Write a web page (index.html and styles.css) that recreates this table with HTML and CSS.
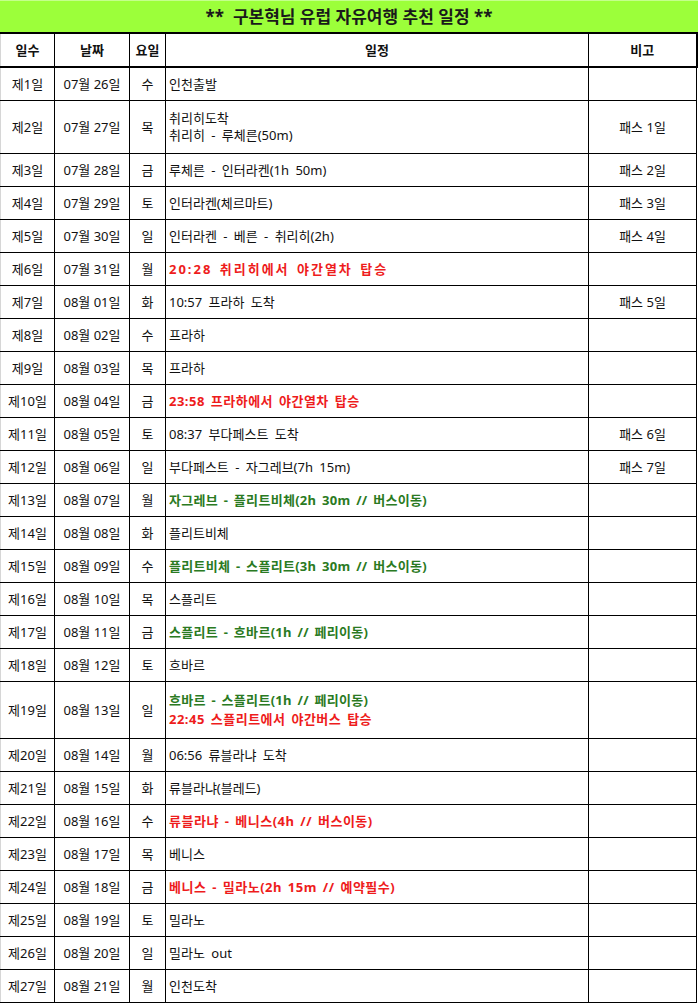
FILE: index.html
```html
<!DOCTYPE html>
<html lang="ko">
<head>
<meta charset="utf-8">
<title>구본혁님 유럽 자유여행 추천 일정</title>
<link rel="stylesheet" href="styles.css">
</head>
<body>
<div class="title">**&nbsp;&nbsp;구본혁님 유럽 자유여행 추천 일정 **</div>
<table class="sched">
<colgroup>
<col class="c1"><col class="c2"><col class="c3"><col class="c4"><col class="c5">
</colgroup>
<thead>
<tr><th>일수</th><th>날짜</th><th>요일</th><th>일정</th><th>비고</th></tr>
</thead>
<tbody>
<tr><td>제1일</td><td>07월 26일</td><td>수</td><td class="plan">인천출발</td><td></td></tr>
<tr class="tall"><td>제2일</td><td>07월 27일</td><td>목</td><td class="plan">취리히도착<br>취리히 - 루체른(50m)</td><td>패스 1일</td></tr>
<tr><td>제3일</td><td>07월 28일</td><td>금</td><td class="plan">루체른 - 인터라켄(1h 50m)</td><td>패스 2일</td></tr>
<tr><td>제4일</td><td>07월 29일</td><td>토</td><td class="plan">인터라켄(체르마트)</td><td>패스 3일</td></tr>
<tr><td>제5일</td><td>07월 30일</td><td>일</td><td class="plan">인터라켄 - 베른 - 취리히(2h)</td><td>패스 4일</td></tr>
<tr><td>제6일</td><td>07월 31일</td><td>월</td><td class="plan"><span class="red wide">20:28 취리히에서 야간열차 탑승</span></td><td></td></tr>
<tr><td>제7일</td><td>08월 01일</td><td>화</td><td class="plan">10:57 프라하 도착</td><td>패스 5일</td></tr>
<tr><td>제8일</td><td>08월 02일</td><td>수</td><td class="plan">프라하</td><td></td></tr>
<tr><td>제9일</td><td>08월 03일</td><td>목</td><td class="plan">프라하</td><td></td></tr>
<tr><td>제10일</td><td>08월 04일</td><td>금</td><td class="plan"><span class="red">23:58 프라하에서 야간열차 탑승</span></td><td></td></tr>
<tr><td>제11일</td><td>08월 05일</td><td>토</td><td class="plan">08:37 부다페스트 도착</td><td>패스 6일</td></tr>
<tr><td>제12일</td><td>08월 06일</td><td>일</td><td class="plan">부다페스트 - 자그레브(7h 15m)</td><td>패스 7일</td></tr>
<tr><td>제13일</td><td>08월 07일</td><td>월</td><td class="plan"><span class="green">자그레브 - 플리트비체(2h 30m // 버스이동)</span></td><td></td></tr>
<tr><td>제14일</td><td>08월 08일</td><td>화</td><td class="plan">플리트비체</td><td></td></tr>
<tr><td>제15일</td><td>08월 09일</td><td>수</td><td class="plan"><span class="green">플리트비체 - 스플리트(3h 30m // 버스이동)</span></td><td></td></tr>
<tr><td>제16일</td><td>08월 10일</td><td>목</td><td class="plan">스플리트</td><td></td></tr>
<tr><td>제17일</td><td>08월 11일</td><td>금</td><td class="plan"><span class="green">스플리트 - 흐바르(1h // 페리이동)</span></td><td></td></tr>
<tr><td>제18일</td><td>08월 12일</td><td>토</td><td class="plan">흐바르</td><td></td></tr>
<tr class="taller"><td>제19일</td><td>08월 13일</td><td>일</td><td class="plan"><span class="green">흐바르 - 스플리트(1h // 페리이동)</span><br><span class="red">22:45 스플리트에서 야간버스 탑승</span></td><td></td></tr>
<tr><td>제20일</td><td>08월 14일</td><td>월</td><td class="plan">06:56 류블라냐 도착</td><td></td></tr>
<tr><td>제21일</td><td>08월 15일</td><td>화</td><td class="plan">류블라냐(블레드)</td><td></td></tr>
<tr><td>제22일</td><td>08월 16일</td><td>수</td><td class="plan"><span class="red">류블라냐 - 베니스(4h // 버스이동)</span></td><td></td></tr>
<tr><td>제23일</td><td>08월 17일</td><td>목</td><td class="plan">베니스</td><td></td></tr>
<tr><td>제24일</td><td>08월 18일</td><td>금</td><td class="plan"><span class="red">베니스 - 밀라노(2h 15m // 예약필수)</span></td><td></td></tr>
<tr><td>제25일</td><td>08월 19일</td><td>토</td><td class="plan">밀라노</td><td></td></tr>
<tr><td>제26일</td><td>08월 20일</td><td>일</td><td class="plan">밀라노 out</td><td></td></tr>
<tr><td>제27일</td><td>08월 21일</td><td>월</td><td class="plan">인천도착</td><td></td></tr>
</tbody>
</table>
</body>
</html>
```
FILE: styles.css
```css
html, body {
  margin: 0;
  padding: 0;
  background: #ffffff;
}
body {
  font-family: "Noto Sans", "Noto Sans CJK KR", sans-serif;
  font-size: 13px;
  color: #111111;
  width: 698px;
}
.title {
  height: 32px;
  line-height: 32px;
  background: #9cff3a;
  border-top: 1px solid #c4ff8c;
  box-sizing: border-box;
  text-align: center;
  font-weight: bold;
  font-size: 17px;
  color: #1a1a1a;
}
.sched {
  border-collapse: collapse;
  table-layout: fixed;
  width: 697px;
}
.c1 { width: 54px; }
.c2 { width: 75px; }
.c3 { width: 36px; }
.c4 { width: 423px; }
.c5 { width: 108px; }
.sched th, .sched td {
  border: 1px solid #000000;
  padding: 0 3px;
  text-align: center;
  vertical-align: middle;
  line-height: 17px;
  white-space: nowrap;
  overflow: hidden;
}
.sched th:first-child, .sched td:first-child {
  border-left: 1px solid #d6d6d6;
}
.sched th {
  height: 32px;
  font-weight: bold;
  border-top: 2px solid #000000;
  border-bottom: 2px solid #000000;
}
.sched th:last-child {
  border-right: 2px solid #000000;
}
.sched td {
  height: 32px;
}
.sched tr.tall td {
  height: 52px;
}
.sched tr.taller td {
  height: 56px;
  line-height: 19px;
}
.sched td.plan {
  text-align: left;
  word-spacing: 3px;
}
.red {
  color: #ee1c1c;
  font-weight: bold;
  word-spacing: 2px;
  letter-spacing: 0.5px;
}
.red.wide {
  letter-spacing: 2px;
}
.green {
  color: #2a7a22;
  font-weight: bold;
  word-spacing: 2px;
  letter-spacing: 0.3px;
}
```
